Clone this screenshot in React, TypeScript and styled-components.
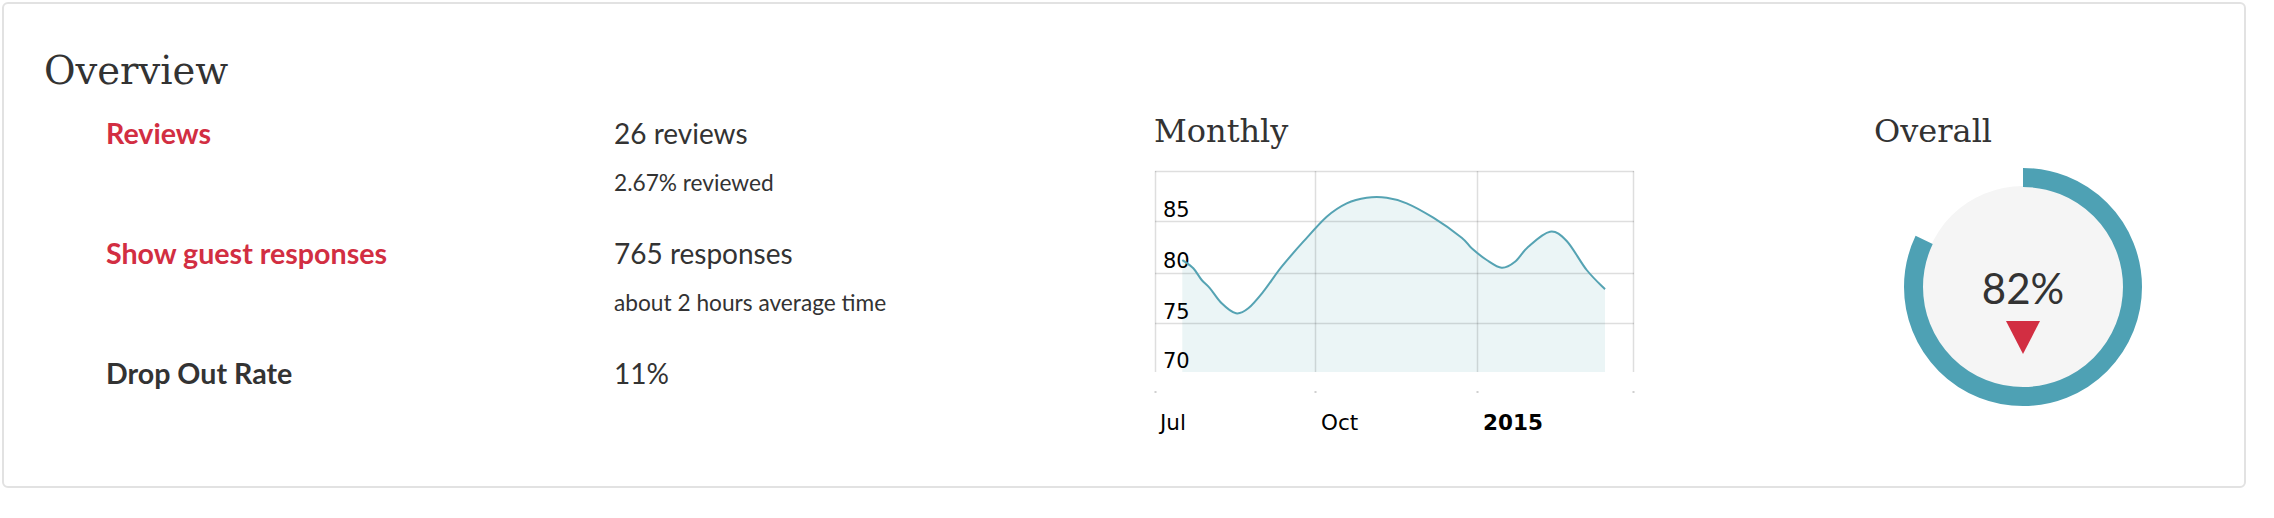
import React from "react";
import styled, { createGlobalStyle } from "styled-components";

const Global = createGlobalStyle`
  html, body { margin: 0; padding: 0; background: #ffffff; }
  body { font-family: "Lato", "Noto Sans", sans-serif; color: #333333; }
  * { box-sizing: border-box; }
`;

const Page = styled.div`
  padding: 2px;
`;

const Card = styled.section`
  width: 2244px;
  height: 486px;
  border: 2px solid #e2e2e2;
  border-radius: 6px;
  padding: 44px 40px 0 40px;
`;

const Title = styled.h1`
  margin: 0;
  font-family: "DejaVu Serif", serif;
  font-weight: normal;
  font-size: 38.5px;
  line-height: 46px;
  color: #333333;
`;

const Body = styled.div`
  margin-top: 19px;
  padding-left: 62px;
  display: grid;
  grid-template-columns: 1048px 720px 1fr;
  align-items: start;
`;

const Stats = styled.div`
  display: flex;
  flex-direction: column;
  gap: 34px;
`;

const StatRow = styled.div`
  display: grid;
  grid-template-columns: 508px 1fr;
  align-items: start;
`;

const Label = styled.a<{ $tone: "link" | "plain" }>`
  font-family: "Lato", sans-serif;
  font-weight: 700;
  font-size: 28.6px;
  line-height: 40px;
  text-decoration: none;
  color: ${(p) => (p.$tone === "link" ? "#d22e42" : "#333333")};
  cursor: ${(p) => (p.$tone === "link" ? "pointer" : "default")};
`;

const Value = styled.div`
  display: flex;
  flex-direction: column;
`;

const Main = styled.div`
  font-family: "Lato", sans-serif;
  font-size: 28px;
  line-height: 40px;
  color: #333333;
`;

const Sub = styled.div`
  margin-top: 14px;
  font-family: "Lato", sans-serif;
  font-size: 22.7px;
  line-height: 32px;
  color: #333333;
`;

const Panel = styled.div`
  display: flex;
  flex-direction: column;
  align-items: flex-start;
`;

const PanelTitle = styled.h2`
  margin: 0;
  font-family: "DejaVu Serif", serif;
  font-weight: normal;
  font-size: 32px;
  line-height: 36px;
  color: #333333;
`;

const ChartSvg = styled.svg`
  display: block;
  margin-top: 22px;
  overflow: visible;
  font-family: "DejaVu Sans", Verdana, sans-serif;
`;

const Donut = styled.div`
  margin-top: 18px;
  margin-left: 29px;
  width: 240px;
  height: 240px;
  display: grid;
  & > * {
    grid-area: 1 / 1;
  }
`;

const DonutCenter = styled.div`
  padding-top: 100px;
  display: flex;
  flex-direction: column;
  align-items: center;
`;

const Percent = styled.div`
  font-family: "Lato", sans-serif;
  font-size: 42px;
  line-height: 42px;
  color: #333333;
`;

const DownArrow = styled.div`
  margin-top: 12px;
  width: 0;
  height: 0;
  border-left: 17px solid transparent;
  border-right: 17px solid transparent;
  border-top: 33px solid #d22e42;
`;

type Pt = [number, number];

const linePoints: Pt[] = [
  [28.3, 89], [39.3, 97.3], [47.7, 109], [56, 117.3], [67.7, 132.3],
  [82, 142.3], [94.3, 137.3], [109.3, 120.7], [127.7, 95.7], [149.3, 70.7],
  [172.7, 45.7], [192.7, 32.3], [212.7, 26.7], [232.7, 26.7], [252.7, 32.3],
  [279.3, 46.7], [307.7, 66.7], [317.7, 77.3], [332.7, 89], [347.7, 96.7],
  [361, 90.7], [374.3, 75.7], [396, 60.7], [412.7, 70], [432.7, 99], [451, 118.3],
];

function smooth(pts: Pt[]): string {
  let d = `M${pts[0][0]},${pts[0][1]}`;
  for (let i = 0; i < pts.length - 1; i++) {
    const p0 = pts[i - 1] || pts[i];
    const p1 = pts[i];
    const p2 = pts[i + 1];
    const p3 = pts[i + 2] || p2;
    const c1x = p1[0] + (p2[0] - p0[0]) / 6;
    const c1y = p1[1] + (p2[1] - p0[1]) / 6;
    const c2x = p2[0] - (p3[0] - p1[0]) / 6;
    const c2y = p2[1] - (p3[1] - p1[1]) / 6;
    d += ` C${c1x.toFixed(1)},${c1y.toFixed(1)} ${c2x.toFixed(1)},${c2y.toFixed(1)} ${p2[0]},${p2[1]}`;
  }
  return d;
}

const PLOT_BOTTOM = 201;
const vLines = [1.5, 161.5, 323.5, 479.5];
const hLines = [0.5, 50.5, 102.5, 152.5];
const yLabels = [
  { t: "85", y: 46 },
  { t: "80", y: 97 },
  { t: "75", y: 148 },
  { t: "70", y: 197 },
];
const xLabels = [
  { t: "Jul", x: 6, bold: false },
  { t: "Oct", x: 167, bold: false },
  { t: "2015", x: 329, bold: true },
];

function MonthlyChart() {
  const linePath = smooth(linePoints);
  const first = linePoints[0];
  const last = linePoints[linePoints.length - 1];
  const areaPath = `${linePath} L${last[0]},${PLOT_BOTTOM} L${first[0]},${PLOT_BOTTOM} Z`;
  return (
    <ChartSvg width={484} height={270} viewBox="0 0 484 270">
      <path d={areaPath} fill="#ebf5f6" />
      {vLines.map((x) => (
        <line key={`v${x}`} x1={x} x2={x} y1={0} y2={PLOT_BOTTOM} stroke="rgba(0,0,0,0.13)" strokeWidth={1.5} />
      ))}
      {hLines.map((y) => (
        <line key={`h${y}`} x1={1} x2={480} y1={y} y2={y} stroke="rgba(0,0,0,0.13)" strokeWidth={1.5} />
      ))}
      {yLabels.map((l) => (
        <text key={l.t} x={9} y={l.y} fontSize={21} fill="#000">
          {l.t}
        </text>
      ))}
      <path d={linePath} fill="none" stroke="#55a3b3" strokeWidth={2} strokeLinejoin="round" />
      {vLines.map((x) => (
        <rect key={`t${x}`} x={x - 1} y={220} width={2} height={2} fill="#d0d0d0" />
      ))}
      {xLabels.map((l) => (
        <text key={l.t} x={l.x} y={259} fontSize={21.5} fontWeight={l.bold ? 700 : 400} fill="#000">
          {l.t}
        </text>
      ))}
    </ChartSvg>
  );
}

function OverallDonut({ value }: { value: number }) {
  const r = 109.5;
  const c = 2 * Math.PI * r;
  return (
    <Donut>
      <svg width={240} height={240} viewBox="0 0 240 240">
        <circle cx={120} cy={120} r={101} fill="#f5f5f5" />
        <circle
          cx={120}
          cy={120}
          r={r}
          fill="none"
          stroke="#4ea1b4"
          strokeWidth={19}
          strokeDasharray={`${(value / 100) * c} ${c}`}
          transform="rotate(-90 120 120)"
        />
      </svg>
      <DonutCenter>
        <Percent>{value}%</Percent>
        <DownArrow />
      </DonutCenter>
    </Donut>
  );
}

export default function App() {
  return (
    <Page>
      <Global />
      <Card>
        <Title>Overview</Title>
        <Body>
          <Stats>
            <StatRow>
              <Label $tone="link" href="#">Reviews</Label>
              <Value>
                <Main>26 reviews</Main>
                <Sub>2.67% reviewed</Sub>
              </Value>
            </StatRow>
            <StatRow>
              <Label $tone="link" href="#">Show guest responses</Label>
              <Value>
                <Main>765 responses</Main>
                <Sub>about 2 hours average time</Sub>
              </Value>
            </StatRow>
            <StatRow>
              <Label as="span" $tone="plain">Drop Out Rate</Label>
              <Value>
                <Main>11%</Main>
              </Value>
            </StatRow>
          </Stats>
          <Panel>
            <PanelTitle>Monthly</PanelTitle>
            <MonthlyChart />
          </Panel>
          <Panel>
            <PanelTitle>Overall</PanelTitle>
            <OverallDonut value={82} />
          </Panel>
        </Body>
      </Card>
    </Page>
  );
}
